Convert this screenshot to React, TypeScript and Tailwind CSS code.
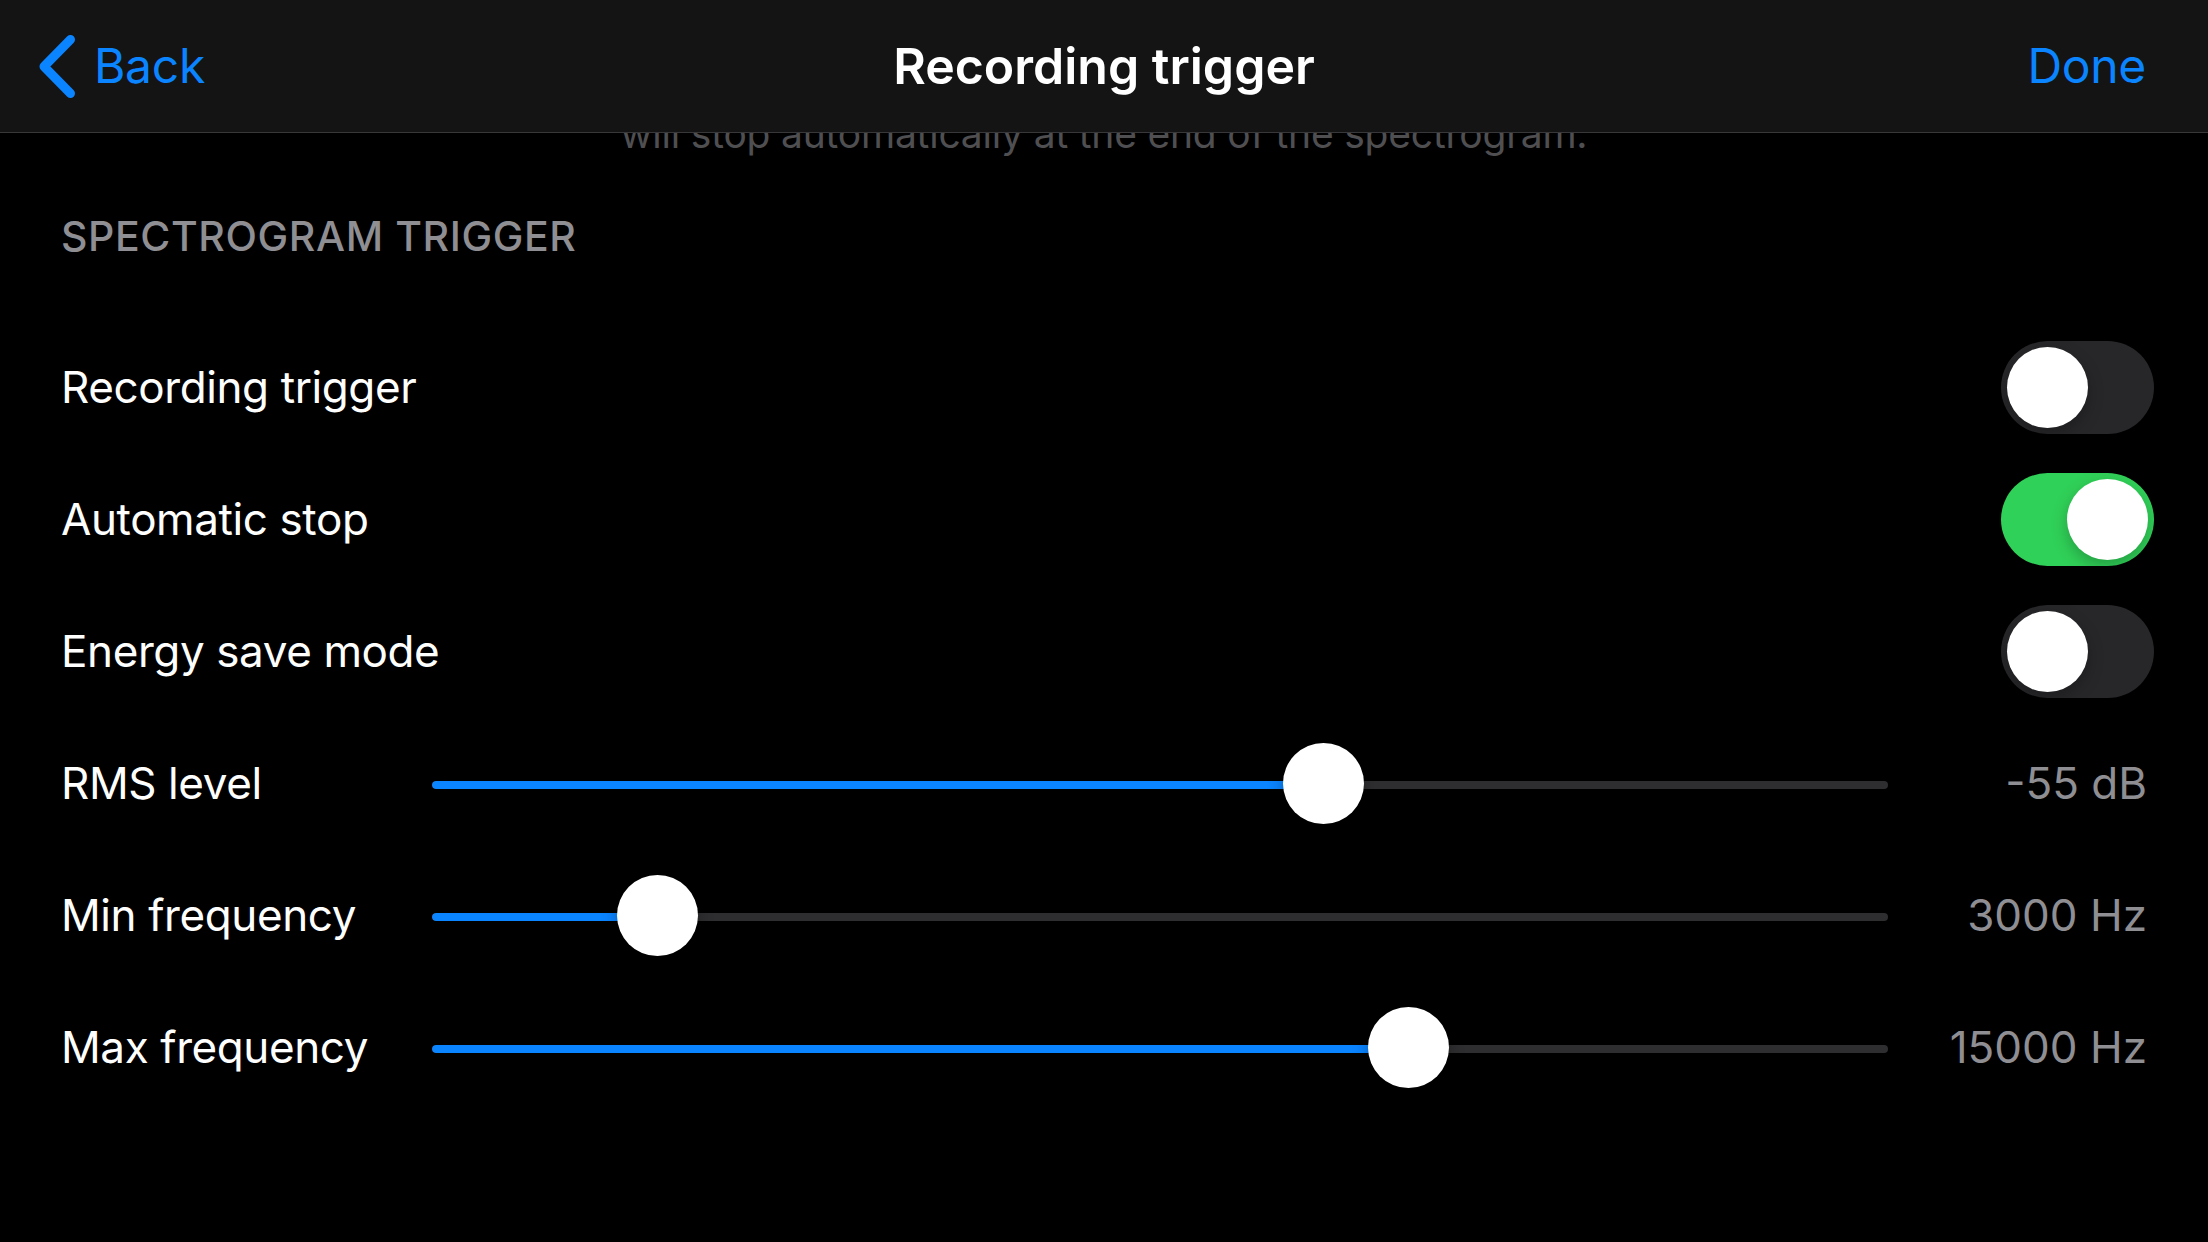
import React from "react";

type SliderRow = { label: string; pct: number; value: string };

const sliders: SliderRow[] = [
  { label: "RMS level", pct: 61.26, value: "-55 dB" },
  { label: "Min frequency", pct: 15.52, value: "3000 Hz" },
  { label: "Max frequency", pct: 67.1, value: "15000 Hz" },
];

function Toggle({ on }: { on: boolean }) {
  return (
    <div
      className={
        on
          ? "w-[153px] h-[93px] rounded-full bg-[#30d158] p-[6px] flex items-center justify-end"
          : "w-[153px] h-[93px] rounded-full bg-[#27272a] p-[6px] flex items-center justify-start"
      }
    >
      <div className="w-[81px] h-[81px] rounded-full bg-white shadow-[0_6px_16px_rgba(0,0,0,0.25)]" />
    </div>
  );
}

function Slider({ pct }: { pct: number }) {
  return (
    <div className="relative w-[1456px] h-[81px] flex items-center">
      <div className="w-full h-[8px] mt-[4px] rounded-full bg-[#2e2e30] overflow-hidden">
        <div className="h-full bg-[#0a84ff] rounded-l-full" style={{ width: `${pct}%` }} />
      </div>
      <div
        className="absolute top-0 w-[81px] h-[81px] -ml-[40.5px] rounded-full bg-white shadow-[0_6px_16px_rgba(0,0,0,0.3)]"
        style={{ left: `${pct}%` }}
      />
    </div>
  );
}

export default function App() {
  return (
    <div
      className="w-[2208px] h-[1242px] bg-black flex flex-col overflow-hidden text-white"
      style={{ fontFamily: "Inter, 'Noto Sans', sans-serif" }}
    >
      <header className="relative z-10 h-[133px] shrink-0 bg-[#141414] border-b border-[#38383a] flex items-center justify-between pl-[34px] pr-[62px]">
        <div className="flex items-center gap-[16px] w-[400px]">
          <svg width="44" height="70" viewBox="0 0 44 70" className="shrink-0">
            <polyline
              points="36.5,8.5 10,35.5 36.5,62.5"
              fill="none"
              stroke="#0a84ff"
              strokeWidth="9"
              strokeLinecap="round"
              strokeLinejoin="round"
            />
          </svg>
          <span className="text-[48px] leading-none text-[#0a84ff] tracking-[-0.3px]">Back</span>
        </div>
        <div className="text-[50px] leading-none font-semibold tracking-[0px]">Recording trigger</div>
        <div className="w-[372px] flex justify-end">
          <span className="text-[48px] leading-none text-[#0a84ff] tracking-[-0.3px]">Done</span>
        </div>
      </header>

      <main className="flex-1 overflow-hidden">
        <div className="-mt-[23px] flex flex-col">
          <p className="h-[48px] text-[39px] leading-[48px] text-center text-[#4f4f52] tracking-[-0.2px]">
            will stop automatically at the end of the spectrogram.
          </p>
          <div className="mt-[53px] h-[50px] pl-[61px] text-[41px] leading-[50px] font-medium text-[#8e8e93] tracking-[0.6px]">
            SPECTROGRAM TRIGGER
          </div>
          <div className="mt-[60px] flex flex-col">
            {[
              { label: "Recording trigger", on: false },
              { label: "Automatic stop", on: true },
              { label: "Energy save mode", on: false },
            ].map((r) => (
              <div key={r.label} className="h-[132px] flex items-center justify-between pl-[61px] pr-[54px]">
                <span className="text-[44px] tracking-[-0.4px]">{r.label}</span>
                <Toggle on={r.on} />
              </div>
            ))}
            {sliders.map((s) => (
              <div key={s.label} className="h-[132px] flex items-center pl-[61px] pr-[61px]">
                <span className="w-[371px] shrink-0 text-[44px] tracking-[-0.4px]">{s.label}</span>
                <Slider pct={s.pct} />
                <span className="flex-1 text-right text-[44px] text-[#8e8e93] tracking-[0px]">{s.value}</span>
              </div>
            ))}
          </div>
        </div>
      </main>
    </div>
  );
}
